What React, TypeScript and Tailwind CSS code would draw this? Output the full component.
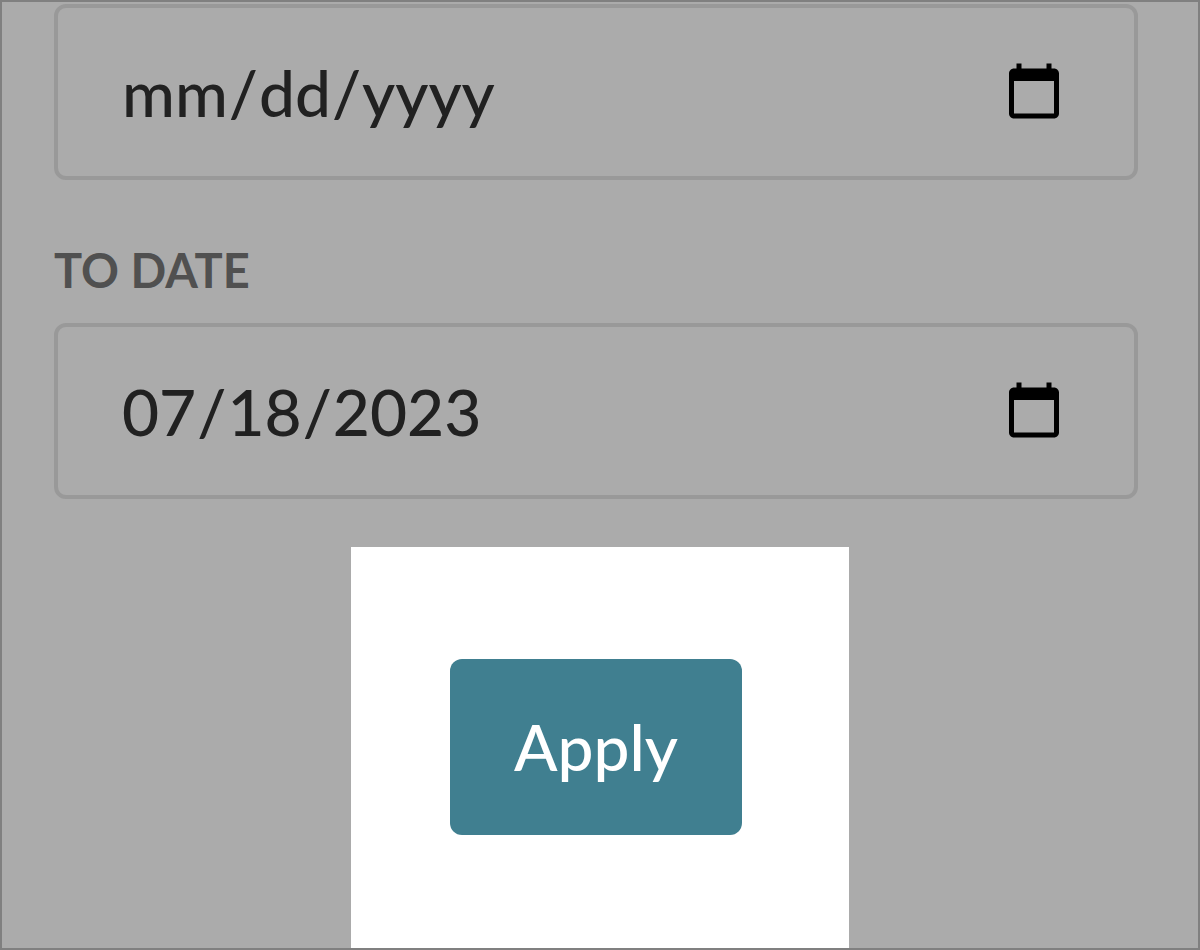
import { useState } from 'react'

function DateField({
  id,
  label,
  value,
  onChange,
}: {
  id: string
  label?: string
  value: string
  onChange: (value: string) => void
}) {
  return (
    <input
      id={id}
      type="date"
      aria-label={label}
      value={value}
      onChange={(e) => onChange(e.target.value)}
      className="block h-44 w-full rounded-xl border-4 border-[#999999] bg-transparent pt-0.5 pr-[66px] pl-[63px] text-[64px] font-medium text-[#212121] outline-none"
    />
  )
}

export default function App() {
  const [from, setFrom] = useState('')
  const [to, setTo] = useState('2023-07-18')

  return (
    <form
      onSubmit={(e) => e.preventDefault()}
      className="flex min-h-screen flex-col border-2 border-[#808080] bg-[#ababab] font-['Lato',sans-serif]"
    >
      <div className="pt-0.5 pr-[60px] pl-[52px]">
        <DateField id="from-date" label="From date" value={from} onChange={setFrom} />
        <label htmlFor="to-date" className="mt-[58px] mb-[21px] block text-[47px] leading-16 font-bold text-[#505050]">
          TO DATE
        </label>
        <DateField id="to-date" value={to} onChange={setTo} />
      </div>
      <div className="mx-auto mt-12 flex w-[498px] flex-1 items-start bg-white pt-28 pl-[99px]">
        <button
          type="submit"
          className="h-44 w-[292px] rounded-xl bg-[#407f90] text-[64px] leading-20 font-medium text-white"
        >
          Apply
        </button>
      </div>
    </form>
  )
}
